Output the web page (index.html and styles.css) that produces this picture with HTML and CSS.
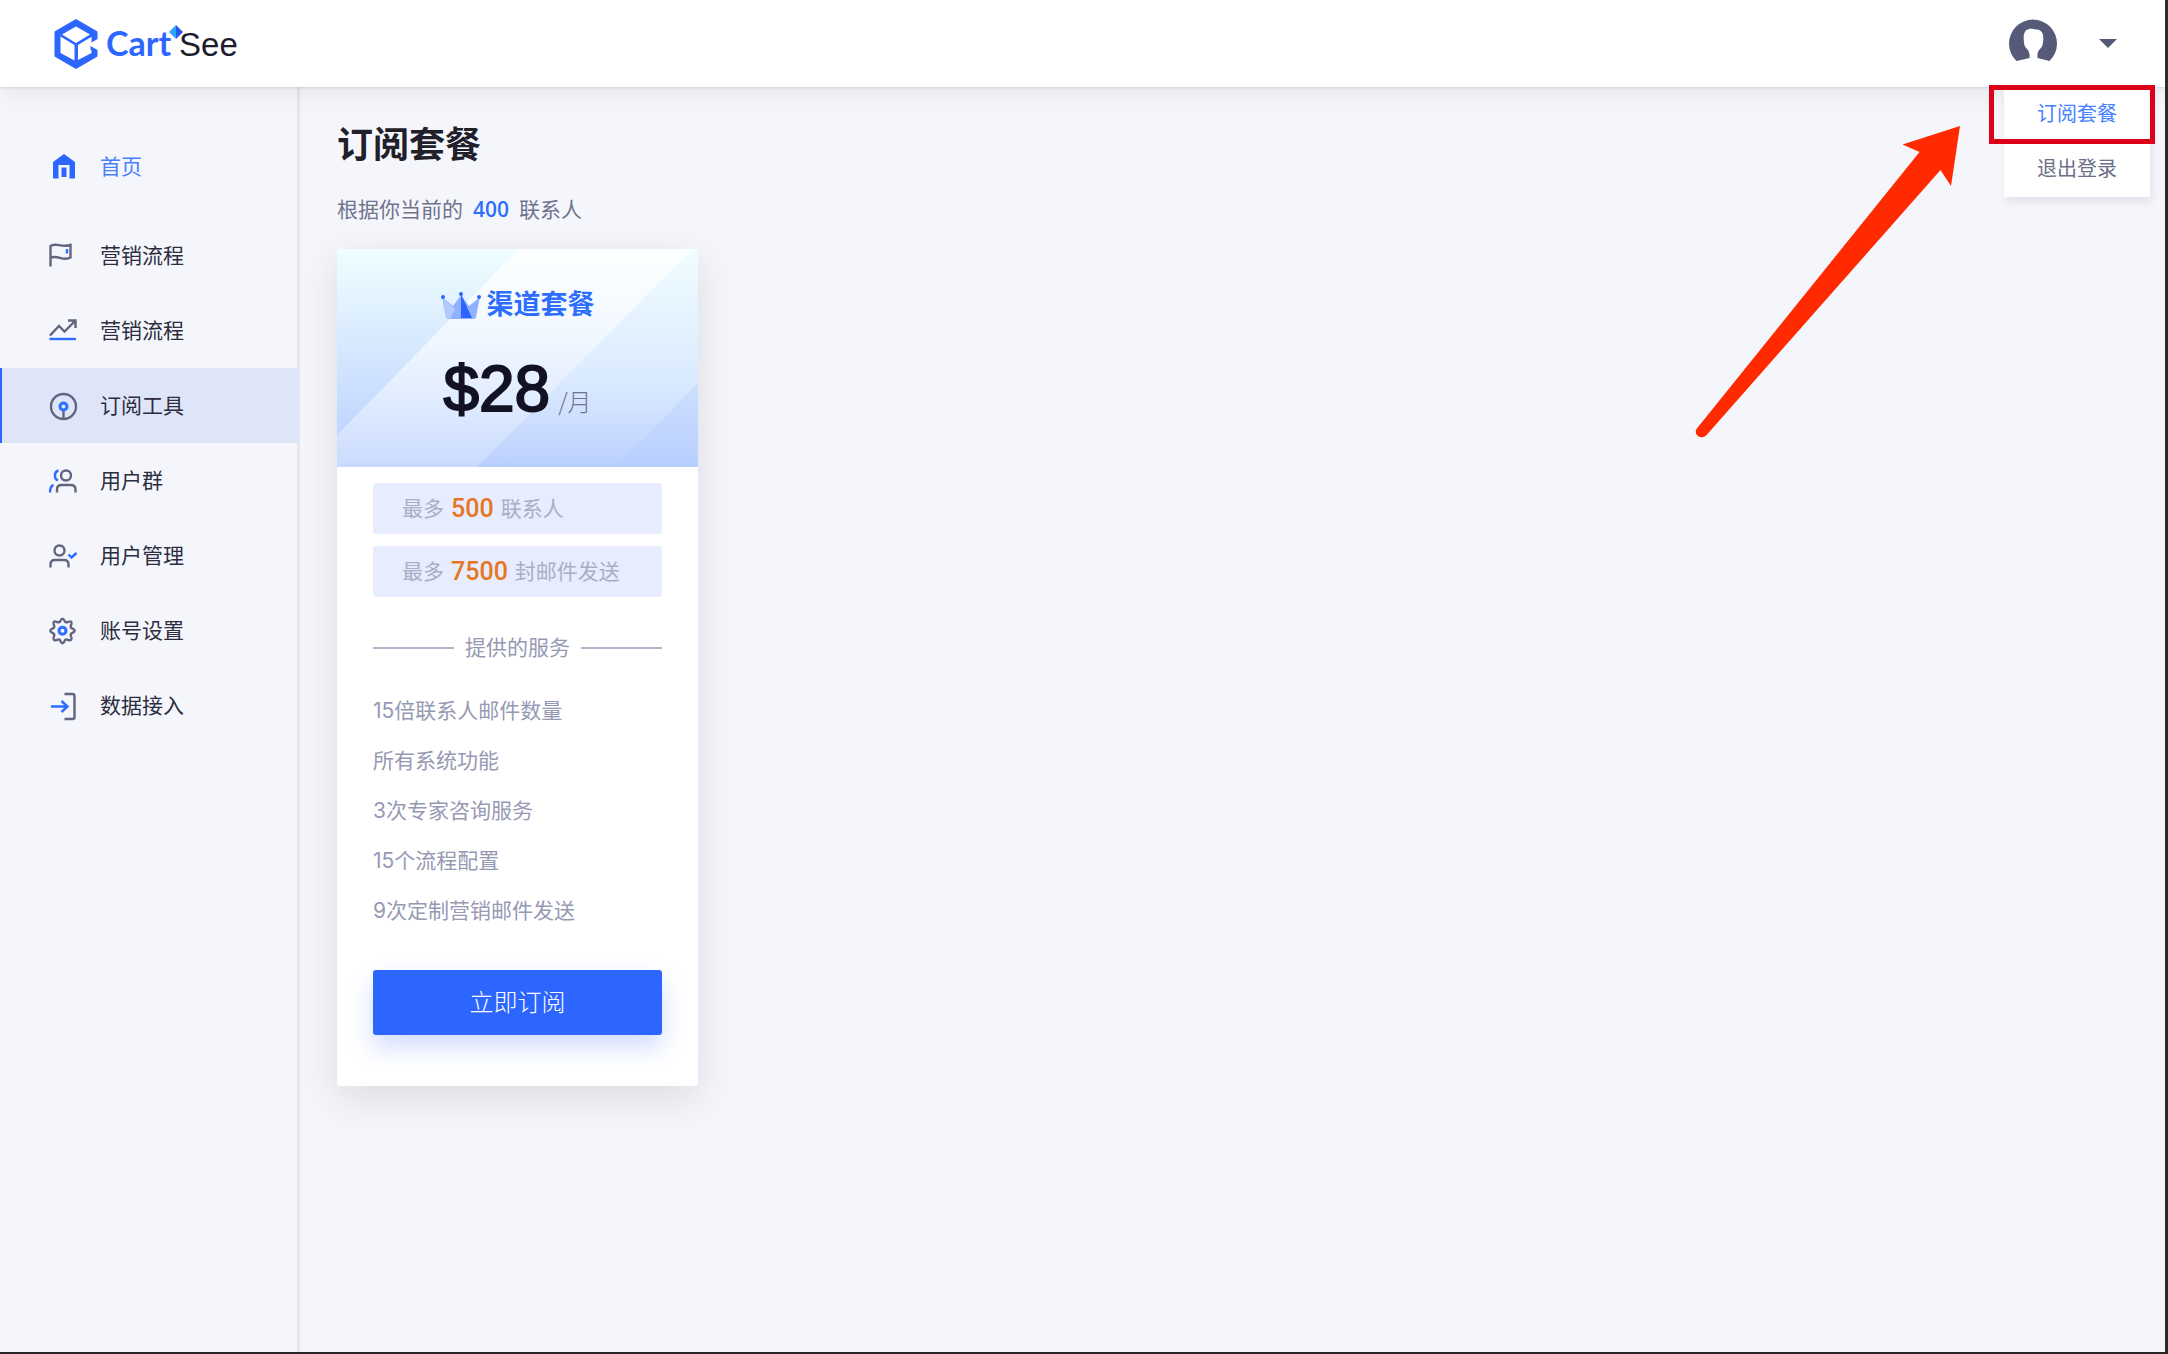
FILE: index.html
```html
<!DOCTYPE html>
<html lang="zh-CN">
<head>
    <meta charset="UTF-8">
    <meta name="viewport" content="width=device-width, initial-scale=1.0">
    <title>CartSee - 订阅套餐</title>
    <link rel="stylesheet" href="styles.css">
</head>
<body>
    <header class="header">
        <a href="#" class="logo">
            <svg class="logo-mark" width="44" height="50" viewBox="0 0 44 50">
                <path fill="#2d66ff" fill-rule="evenodd" d="M22 0 L43.500 12.500 V20 L37.500 23.500 V17.800 L24 26 V41 L37.500 34 V31.500 L36.500 30.500 V27 L43.500 31 V37.500 L22 50 L.5 37.500 V12.500 Z M22 7.500 L8 15.500 L22 24 L36 15.500 Z M6.500 17.500 V34 L20.500 41.500 V26 Z"/>
            </svg>
            <span class="logo-text">
                <span class="logo-cart">Cart</span><span class="logo-see">See</span>
                <svg class="logo-spark" width="14" height="14" viewBox="0 0 14 14">
                    <path fill="#2ea3ff" d="M7 0 L0 7 L7 14 Z"/>
                    <path fill="#2557e8" d="M7 0 L14 7 L7 14 Z"/>
                </svg>
            </span>
        </a>
        <button class="account" type="button" aria-label="账号">
            <svg width="48" height="50" viewBox="0 0 48 50">
                <path fill="#565a78" d="M7.500 42 A24 24 0 1 1 40.500 42 L28.500 39 C28 34 29 32 31 30 C33 28 34 26 34 23 C35 17 34 11 28 10.500 C26 10.500 23 9.500 20 10 C15 11 14 17 15 23 C15 26 16 28 18 30 C20 32 21 35 20.500 39 Z"/>
            </svg>
            <svg width="18" height="9" viewBox="0 0 18 9">
                <path fill="#565a78" d="M0 0 H18 L9 9 Z"/>
            </svg>
        </button>
        <div class="account-menu">
            <a href="#" class="account-link current">订阅套餐</a>
            <a href="#" class="account-link">退出登录</a>
            <div class="highlight"></div>
        </div>
    </header>

    <div class="layout">
        <nav class="sidebar">
            <a href="#" class="nav-item home">
                <svg class="nav-icon" viewBox="0 0 30 30">
                    <path fill="#2d66ff" d="M16 2 L27 10 V26.500 H21.500 V13 H10.500 V26.500 H5 V10 Z"/>
                    <path fill="#2d66ff" d="M13.500 15.500 H18.500 V25 H13.500 Z"/>
                </svg>
                首页
            </a>
            <a href="#" class="nav-item">
                <svg class="nav-icon" viewBox="0 0 30 30">
                    <path class="line" d="M2.500 25.500 V5 C8 1 13 7 22.500 4 V16.500 C15 21 9 13 2.500 17"/>
                    <path class="line blue" d="M19 8 V12.500"/>
                </svg>
                营销流程
            </a>
            <a href="#" class="nav-item">
                <svg class="nav-icon" viewBox="0 0 30 30">
                    <path class="line" d="M2 19.500 L11 10 L16.500 15.500 L27 5 M20 4.500 H27.500 V12"/>
                    <path class="line blue" d="M1.500 23 H28"/>
                </svg>
                营销流程
            </a>
            <a href="#" class="nav-item active">
                <svg class="nav-icon" viewBox="0 0 30 30">
                    <circle class="line" cx="15.500" cy="15.500" r="12.500"/>
                    <path class="line" d="M15.500 19 V28"/>
                    <circle class="line blue thick" cx="15.500" cy="15.500" r="3.500"/>
                </svg>
                订阅工具
            </a>
            <a href="#" class="nav-item">
                <svg class="nav-icon" viewBox="0 0 30 30">
                    <circle class="line" cx="18" cy="9.500" r="5"/>
                    <path class="line" d="M9 26.500 V23.500 C9 20.500 11 19 13.500 19 H23 C25.500 19 27.500 20.500 27.500 23.500 V26.500"/>
                    <path class="line blue" d="M10.500 4.500 C6 5.500 5.500 12.500 10 14.500 M2 26.500 C2 22.500 2.500 20 5.500 19"/>
                </svg>
                用户群
            </a>
            <a href="#" class="nav-item">
                <svg class="nav-icon" viewBox="0 0 30 30">
                    <circle class="line" cx="11.500" cy="9.500" r="5"/>
                    <path class="line" d="M2.500 26.500 V23.500 C2.500 20.500 4.500 19 7 19 H16 C18.500 19 20.500 20.500 20.500 23.500 V26.500"/>
                    <path class="line blue" d="M20.500 13.500 L23.500 16.500 L28.500 12"/>
                </svg>
                用户管理
            </a>
            <a href="#" class="nav-item">
                <svg class="nav-icon" viewBox="0 0 30 30">
                    <path class="line" d="M12.600 4.500 Q14.500 .8 16.400 4.500 Q17 7 20 6 Q24.500 4 23.300 8.500 Q21.500 11.200 24.500 12.700 Q29 14.800 24.500 16.800 Q21.500 18 23.300 21 Q24.500 25.500 20 23.800 Q17 22.600 16.400 25.500 Q14.500 29 12.600 25.500 Q12 22.600 9 23.800 Q4.500 25.500 5.700 21 Q7.500 18 4.500 16.800 Q0 14.800 4.500 12.700 Q7.500 11.200 5.700 8.500 Q4.500 4 9 6 Q12 7 12.600 4.500 Z"/>
                    <circle class="line blue thick" cx="14.500" cy="14.800" r="3.500"/>
                </svg>
                账号设置
            </a>
            <a href="#" class="nav-item">
                <svg class="nav-icon" viewBox="0 0 30 30">
                    <path class="line" d="M16.500 3 H24.500 Q26.500 3 26.500 5 V26 Q26.500 28 24.500 28 H16.500"/>
                    <path class="line blue" d="M3 15.500 H19 M13.500 10 L19.500 15.500 L13.500 21"/>
                </svg>
                数据接入
            </a>
        </nav>

        <main class="content">
            <h1 class="page-title">订阅套餐</h1>
            <p class="summary">根据你当前的<strong class="contact-count">400</strong>联系人</p>

            <section class="plan">
                <div class="plan-head">
                    <svg class="plan-stripes" viewBox="0 0 361 218" preserveAspectRatio="none">
                        <defs>
                            <linearGradient id="stripe-a" x1="0" y1="0" x2="0" y2="1">
                                <stop offset="0" stop-color="#fff" stop-opacity=".85"/>
                                <stop offset="1" stop-color="#fff" stop-opacity=".25"/>
                            </linearGradient>
                            <linearGradient id="stripe-b" x1="0" y1="0" x2="0" y2="1">
                                <stop offset="0" stop-color="#fff" stop-opacity=".1"/>
                                <stop offset=".5" stop-color="#f0fbff" stop-opacity=".4"/>
                                <stop offset="1" stop-color="#fff" stop-opacity=".02"/>
                            </linearGradient>
                        </defs>
                        <path fill="url(#stripe-a)" d="M182 0 H356 L140 218 H0 V186 Z"/>
                        <path fill="url(#stripe-b)" d="M356 0 H361 V134 L278 218 H140 Z"/>
                    </svg>
                    <h2 class="plan-name">
                        <svg width="40" height="27" viewBox="0 0 40 27">
                            <path fill="#8fb2ff" d="M1 5 L12 14 L20 3 L28 14 L39 5 L35 25 Q35 27 33 27 H7 Q5 27 5 25 Z"/>
                            <path fill="#b3caff" d="M2 6 L14 17 L9 27 H7 Q5 27 5 25 Z"/>
                            <path fill="#2d66ff" d="M20 2 L31 26 H20 Z"/>
                            <g fill="#2d66ff">
                                <circle cx="2" cy="5" r="2"/>
                                <circle cx="20" cy="2" r="2"/>
                                <circle cx="38" cy="5" r="2"/>
                            </g>
                        </svg>
                        渠道套餐
                    </h2>
                    <p class="price">$28<span class="price-unit">/月</span></p>
                </div>
                <div class="plan-body">
                    <p class="quota">最多<strong>500</strong>联系人</p>
                    <p class="quota">最多<strong>7500</strong>封邮件发送</p>
                    <h3 class="divider">提供的服务</h3>
                    <ul class="services">
                        <li>15倍联系人邮件数量</li>
                        <li>所有系统功能</li>
                        <li>3次专家咨询服务</li>
                        <li>15个流程配置</li>
                        <li>9次定制营销邮件发送</li>
                    </ul>
                    <button class="subscribe" type="button">立即订阅</button>
                </div>
            </section>
        </main>
    </div>

    <svg class="pointer" width="266" height="312" viewBox="0 0 266 312">
        <path fill="#ff2a00" d="M265 0 L207.500 18.500 L224.500 26 L1.500 303 C-2 309 7 315 12.500 308 L245.500 44 L256 60 Z"/>
    </svg>
</body>
</html>
```

FILE: styles.css
```css
* {
    margin: 0;
    padding: 0;
    box-sizing: border-box;
}

body {
    display: flex;
    flex-direction: column;
    position: relative;
    min-height: 100vh;
    font-family: Inter, "Noto Sans CJK SC", sans-serif;
    font-size: 21px;
    line-height: 30px;
    color: #2c2d3f;
    background: #f4f6fb;
    border-right: 3px solid #292c2a;
    border-bottom: 2px solid #292529;
}

a {
    color: inherit;
    text-decoration: none;
}

button {
    border: none;
    font: inherit;
    cursor: pointer;
}

/* Header */
.header {
    display: flex;
    justify-content: space-between;
    align-items: center;
    position: relative;
    z-index: 2;
    height: 87px;
    padding: 0 48px 0 54px;
    background: #fff;
    box-shadow: 0 1px 2px rgba(0, 0, 0, 0.1), 0 6px 24px rgba(0, 0, 0, 0.07);
}

.logo {
    display: flex;
    align-items: center;
    gap: 8px;
}

.logo-text {
    display: flex;
    align-items: baseline;
    gap: 8px;
    position: relative;
    line-height: 44px;
}

.logo-cart {
    font-family: Lato, sans-serif;
    font-size: 34px;
    font-weight: 700;
    color: #2d66ff;
}

.logo-see {
    font-family: "Liberation Sans", sans-serif;
    font-size: 33px;
    color: #1c1d2e;
}

.logo-spark {
    position: absolute;
    left: 63px;
    top: 4px;
}

.account {
    display: flex;
    align-items: center;
    gap: 42px;
    background: none;
}

.account-menu {
    position: absolute;
    top: 87px;
    right: 15px;
    width: 146px;
    background: #fff;
    box-shadow: 2px 5px 8px rgba(0, 0, 0, 0.08);
}

.account-link {
    display: block;
    font-size: 20px;
    line-height: 55px;
    text-align: center;
    color: #6c6f87;
}

.account-link.current {
    color: #4680ff;
}

.highlight {
    position: absolute;
    left: -15px;
    right: -5px;
    top: -2px;
    height: 59px;
    border: 5px solid #dc0019;
}

/* Sidebar */
.layout {
    display: flex;
    flex: 1;
}

.sidebar {
    flex: 0 0 300px;
    padding-top: 42px;
    border-right: 3px solid #e6e7ed;
}

.nav-item {
    display: flex;
    align-items: center;
    gap: 22px;
    height: 75px;
    margin-right: -3px;
    padding-left: 48px;
}

.nav-item.home {
    margin-bottom: 14px;
    color: #4680ff;
}

.nav-item.active {
    background: #dfe5f9;
    box-shadow: inset 2px 0 #2d66ff;
}

.nav-icon {
    width: 30px;
    height: 30px;
}

.line {
    fill: none;
    stroke: #62657f;
    stroke-width: 2.4;
}

.line.blue {
    stroke: #2d6eff;
}

.line.thick {
    stroke-width: 3;
}

/* Content */
.content {
    flex: 1;
    padding: 32px 37px;
}

.page-title {
    font-size: 36px;
    font-weight: 700;
    line-height: 52px;
    color: #1f2029;
}

.summary {
    margin: 23px 0 24px;
    color: #71738e;
}

.contact-count {
    margin: 0 10px;
    font-family: "Open Sans", sans-serif;
    font-weight: 600;
    color: #2d6eff;
}

.plan {
    width: 361px;
    background: #fff;
    border-radius: 3px;
    box-shadow: 0 12px 40px rgba(20, 20, 40, 0.11);
}

.plan-head {
    position: relative;
    height: 218px;
    padding-top: 36px;
    text-align: center;
    background: linear-gradient(#effeff, #b8ceff);
    border-radius: 3px 3px 0 0;
}

.plan-stripes {
    position: absolute;
    inset: 0;
    width: 100%;
    height: 100%;
}

.plan-name {
    display: flex;
    justify-content: center;
    align-items: center;
    gap: 6px;
    position: relative;
    font-size: 27px;
    font-weight: 700;
    line-height: 40px;
    color: #2d6eff;
}

.price {
    position: relative;
    margin-top: 28px;
    font-family: "Liberation Sans", "Noto Sans CJK SC", sans-serif;
    font-size: 64px;
    line-height: 72px;
    color: #121223;
    -webkit-text-stroke: 2px #121223;
}

.price-unit {
    margin-left: 8px;
    font-family: "Noto Sans CJK SC", sans-serif;
    font-size: 24px;
    font-weight: 300;
    color: #71738e;
    -webkit-text-stroke: 0;
}

.plan-body {
    padding: 16px 36px 51px;
}

.quota {
    display: flex;
    align-items: center;
    gap: 7px;
    height: 51px;
    margin-bottom: 12px;
    padding-left: 29px;
    color: #a9aec6;
    background: #e7ecff;
    border-radius: 3px;
}

.quota strong {
    font-family: Roboto, sans-serif;
    font-size: 25px;
    font-weight: 500;
    color: #e67623;
}

.divider {
    display: flex;
    align-items: center;
    gap: 11px;
    margin: 36px 0 23px;
    font-size: 21px;
    font-weight: 400;
    color: #9699b3;
}

.divider::before,
.divider::after {
    content: "";
    flex: 1;
    height: 2px;
    background: #b1b4ca;
}

.services {
    list-style: none;
    margin-bottom: 34px;
    line-height: 50px;
    color: #9699b3;
}

.subscribe {
    display: block;
    width: 100%;
    height: 65px;
    font-size: 24px;
    font-weight: 300;
    color: #fff;
    background: #2d66ff;
    border-radius: 3px;
    box-shadow: 0 12px 24px rgba(45, 102, 255, 0.22);
}

/* Red arrow over the page, pointing at the account menu */
.pointer {
    position: absolute;
    top: 126px;
    right: 204px;
    z-index: 3;
}
```
